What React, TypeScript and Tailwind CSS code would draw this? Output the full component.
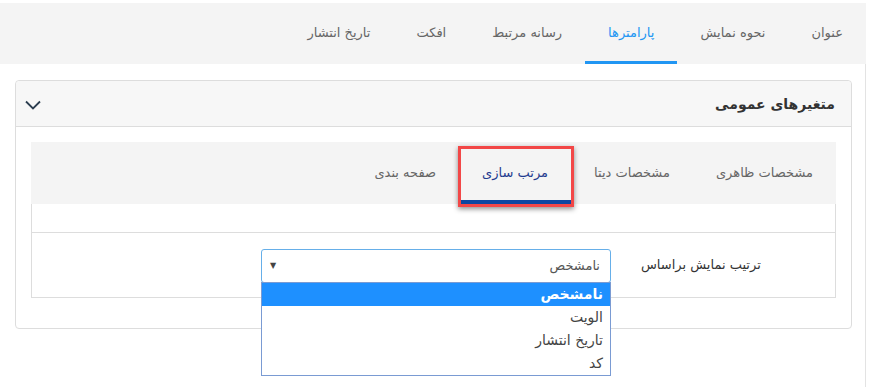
const topTabs = ["عنوان", "نحوه نمایش", "پارامترها", "رسانه مرتبط", "افکت", "تاریخ انتشار"];
const innerTabs = ["مشخصات ظاهری", "مشخصات دیتا", "مرتب سازی", "صفحه بندی"];
const options = ["نامشخص", "الویت", "تاریخ انتشار", "کد"];

export default function App() {
  return (
    <div
      dir="rtl"
      className="w-[870px] h-[387px] bg-white pt-[3px] overflow-hidden"
      style={{ fontFamily: '"DejaVu Sans", sans-serif' }}
    >
      <div className="flex flex-col w-[866px] h-full mr-auto ml-0">
        {/* top tabs */}
        <div className="flex h-[61px] bg-[#f4f4f4] shrink-0">
          {topTabs.map((t, i) => (
            <div
              key={t}
              className={`flex items-center px-[23px] text-[13px] border-b-[3px] pt-[2px] ${
                i === 2 ? "border-[#2196f3] text-[#2196f3]" : "border-transparent text-[#666]"
              }`}
            >
              {t}
            </div>
          ))}
        </div>

        <div className="flex-1 border-r border-[#e3e3e3] pt-4 pr-[13px] pl-[15px]">
          {/* panel */}
          <div className="border border-[#dddddd] rounded-[4px] bg-white">
            <div className="flex items-center justify-between h-[46px] bg-[#f7f7f7] border-b border-[#dddddd] rounded-t-[4px] pr-4 pl-[9px]">
              <span className="text-[14px] font-bold text-[#333] pt-[2px]">متغیرهای عمومی</span>
              <svg width="16" height="10" viewBox="0 0 16 10" fill="none" className="mt-[2px]">
                <polyline points="1,1.5 8,8.5 15,1.5" stroke="#2c3e50" strokeWidth="1.8" />
              </svg>
            </div>

            <div className="px-[15px] pt-[15px] pb-[30px]">
              <div className="relative">
                <div className="flex h-[62px] bg-[#f4f4f4]">
                  {innerTabs.map((t, i) => (
                    <div
                      key={t}
                      className={`flex items-center px-[23px] text-[13px] border-b-[4px] pt-[3px] ${
                        i === 2 ? "border-[#0d47a1] text-[#1f3b8f]" : "border-transparent text-[#666]"
                      }`}
                    >
                      {t}
                    </div>
                  ))}
                </div>
                {/* annotation box */}
                <div className="absolute top-[4px] right-[262px] w-[116px] h-[61px] border-[3px] border-[#f24747] shadow-[0_2px_5px_rgba(0,0,0,0.45)] pointer-events-none" />

                <div className="border-x border-b border-[#dddddd]">
                  <div className="h-[29px] border-b border-[#dddddd]" />
                  <div className="flex items-center h-[64px] pl-[229px]">
                    <div className="flex-1 pl-[30px] text-left text-[13px] text-[#333] whitespace-nowrap">ترتیب نمایش براساس</div>
                    <div className="relative shrink-0">
                      <div className="flex items-center justify-between w-[350px] h-[34px] border border-[#66afe9] rounded-[3px] pr-[10px] pl-[8px] text-[13px] text-[#555] mt-[1px]">
                        <span>نامشخص</span>
                        <span className="text-[8px] text-[#444]">▼</span>
                      </div>
                      <div className="absolute top-[34px] right-0 w-[350px] bg-white border border-[#7a9bd3] z-10">
                        {options.map((o, i) => (
                          <div
                            key={o}
                            className={`h-[23px] flex items-center pr-[7px] text-[14px] ${
                              i === 0 ? "bg-[#1e90ff] text-white font-bold" : "text-[#444]"
                            }`}
                          >
                            {o}
                          </div>
                        ))}
                      </div>
                    </div>
                  </div>
                </div>
              </div>
            </div>
          </div>
        </div>
      </div>
    </div>
  );
}
